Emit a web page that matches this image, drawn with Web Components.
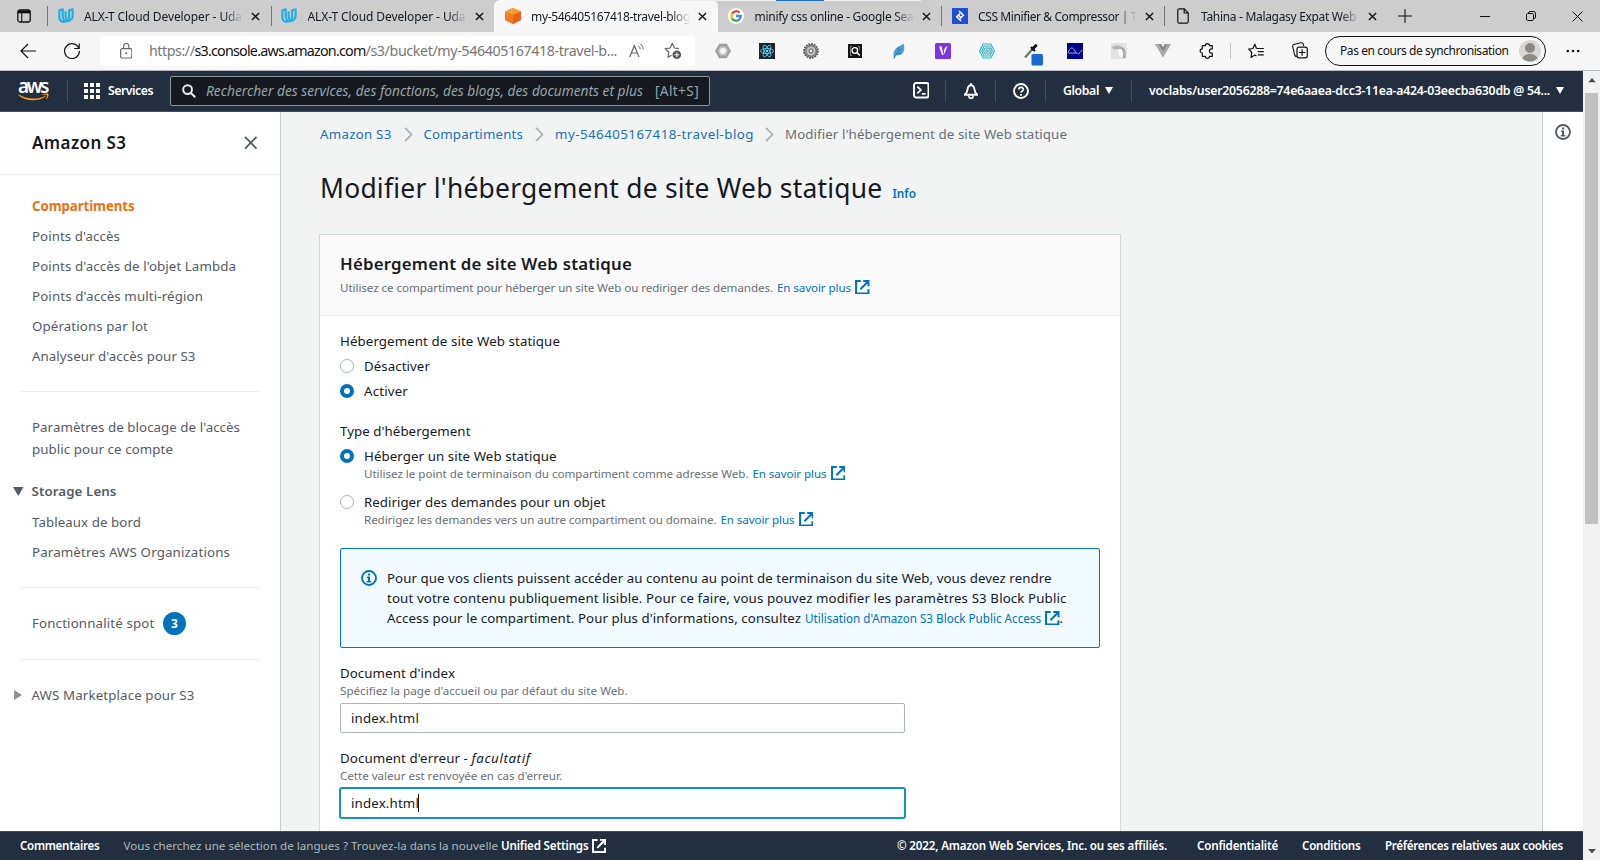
<!DOCTYPE html>
<html lang="fr">
<head>
<meta charset="utf-8">
<title>Modifier l'hébergement de site Web statique</title>
<style>
html,body{margin:0;height:100%;overflow:hidden}
body{font-family:"Noto Sans","Open Sans",sans-serif;font-size:13.3px;color:#16191f;background:#f2f3f3}
</style>
</head>
<body>
<s3-app></s3-app>
<script>
const define = (name, css, html, extra) => customElements.define(name, class extends HTMLElement {
  connectedCallback() {
    if (this.shadowRoot) return;
    const t = document.createElement('template');
    t.innerHTML = `<style>*{box-sizing:border-box}${css}</style>${typeof html === 'function' ? html(this) : html}`;
    this.attachShadow({mode: 'open'}).append(t.content.cloneNode(true));
    if (extra) extra(this);
  }
});

/* One-line text set to a given advance width by tracking. */
define('fit-text', ':host{display:block;white-space:pre;flex:none}span{display:inline-block}', '<span><slot></slot></span>', el => {
  const s = el.shadowRoot.querySelector('span'), w = +el.getAttribute('w');
  const n = el.textContent.length;
  if (!w) return;
  s.style.letterSpacing = ((w - s.getBoundingClientRect().width) / n).toFixed(3) + 'px';
  el.style.width = w + 'px';
});

const ICONS = {
  workspace: ['0 0 14 14', '<rect x=".8" y="1" width="12.4" height="12" rx="2" fill="none" stroke="#111" stroke-width="1.3"/><path d="M1 1.5h12v2.8H1z" fill="#111"/><path d="M4.7 4v9" stroke="#111" stroke-width="1.1"/>'],
  udacity: ['0 0 17 17', '<g fill="none" stroke="#22b1dc" stroke-width="2.300" stroke-linejoin="round"><path d="M1.400 2.500 5 1.300v7.500c0 3.200 2 4.600 4.400 4.900-1.200.700-2.300 1-3.400 1C3.200 14.700 1.400 12.600 1.400 9z"/><path d="M15.600 1.300 11.800 2.500v6.300c0 3.200-1 4.300-2.700 5.200 4.200-.100 6.500-1.900 6.500-6z"/><path d="M8.100 3.500v5.300c0 2 .5 3.200 1.900 4"/></g>'],
  close: ['0 0 10 10', '<path d="m1 1 8 8M9 1 1 9" stroke="#111" stroke-width="1.5"/>'],
  cube: ['0 0 17 17', '<path d="M8.500 0 17 3.700v9.100L8.500 17 0 12.800V3.700z" fill="#f58220"/><path d="m0 3.700 8.500 3.600V17L0 12.800z" fill="#f47a20"/><path d="m17 3.700-8.500 3.600V17l8.500-4.200z" fill="#e8601c"/><path d="m8.500 0 8.500 3.700-8.500 3.600L0 3.700z" fill="#fb9d32"/>'],
  google: ['0 0 16 16', '<circle cx="8" cy="8" r="8" fill="#fff"/><g fill="none" stroke-width="2.300"><path d="M3.900 5.600A4.800 4.800 0 0 1 11.400 4.600" stroke="#ea4335"/><path d="M3.900 10.400a4.800 4.800 0 0 1 0-4.800" stroke="#fbbc05"/><path d="M3.900 10.400a4.800 4.800 0 0 0 7.400 1.100" stroke="#34a853"/><path d="M8 8h4.800a4.800 4.800 0 0 1-1.600 3.600" stroke="#4285f4"/></g>'],
  toptal: ['0 0 16 16', '<path d="M0 0h16v16H0z" fill="#204ecf"/><path d="m7 3 4.300 4.300-3.200 3.200m1 2.500L4.700 8.700l3.200-3.200M6.500 7.200l3 3" fill="none" stroke="#fff" stroke-width="1.500"/>'],
  doc: ['0 0 12 16', '<path d="M1.700.8h5.600L11.200 5v8.700c0 .9-.5 1.500-1.400 1.500H2.200c-.9 0-1.400-.6-1.400-1.500V2.200C.8 1.300 1.300.8 2.200.8M7.200.8V5h4" fill="none" stroke="#111" stroke-width="1.200"/>'],
  plus: ['0 0 14 14', '<path d="M7 0v14M0 7h14" stroke="#111" stroke-width="1.100"/>'],
  min: ['0 0 10 10', '<path d="M0 5.500h10" stroke="#111"/>'],
  restore: ['0 0 10 10', '<path d="M2.500 2.500V2q0-1.500 1.500-1.500h3.500q2 0 2 2V6q0 1.500-1.500 1.500" fill="none" stroke="#111"/><rect x=".5" y="2.500" width="7" height="7" rx="1.200" fill="none" stroke="#111"/>'],
  winclose: ['0 0 11 11', '<path d="m.5.5 10 10m0-10-10 10" stroke="#111"/>'],
  back: ['0 0 16 16', '<path d="M16 8H1M8 1 1 8l7 7" fill="none" stroke="#111" stroke-width="1.200"/>'],
  reload: ['0 0 16 16', '<path d="M14.800 5.200A7.400 7.400 0 1 0 15.400 8M15.200.5v5h-5" fill="none" stroke="#111" stroke-width="1.200"/>'],
  lock: ['0 0 12 16', '<rect x=".6" y="5.600" width="10.800" height="9.400" rx="1.500" fill="none" stroke="#666" stroke-width="1.100"/><path d="M3.500 5.500V3a2.500 2.500 0 0 1 5 0v2.500" fill="none" stroke="#666" stroke-width="1.100"/><circle cx="6" cy="10.300" r="1" fill="#666"/>'],
  read: ['0 0 16 16', '<path d="M.7 14 5.300 2.700 10 14M2.300 10h6" fill="none" stroke="#666" stroke-width="1.200"/><path d="M9.500 3a4 4 0 0 1 1.700 3.400M11.300.8A7 7 0 0 1 14.300 6.500" fill="none" stroke="#666"/>'],
  staradd: ['0 0 18 18', '<path d="M15 6.600 10.400 6 8.300 1.300 6.200 6 1.200 6.700l3.600 3.500L4 15.300l3.700-2" fill="none" stroke="#666" stroke-width="1.200" stroke-linejoin="round"/><circle cx="12.800" cy="12.800" r="4.300" fill="#555"/><path d="M12.800 10.400v4.800m-2.400-2.400h4.800" stroke="#fff"/>'],
  hex: ['0 0 16 16', '<path d="M4.200.8h7.600L16 8l-4.200 7.200H4.200L0 8z" fill="#a0a0a0"/><path d="m5.300 3.500h5.400L13.300 8l-2.600 4.500H5.300L2.700 8z" fill="#c4c4c4"/><circle cx="8" cy="8" r="3" fill="#f4f4f4"/>'],
  react: ['0 0 16 16', '<path d="M0 0h16v16H0z" fill="#20232a"/><g fill="none" stroke="#61dafb" stroke-width=".8"><ellipse cx="8" cy="8" rx="6.500" ry="2.500"/><ellipse cx="8" cy="8" rx="6.500" ry="2.500" transform="rotate(60 8 8)"/><ellipse cx="8" cy="8" rx="6.500" ry="2.500" transform="rotate(120 8 8)"/></g><circle cx="8" cy="8" r="1.300" fill="#61dafb"/>'],
  gear: ['0 0 16 16', '<circle cx="8" cy="8" r="7" fill="#999" stroke="#555" stroke-width="1.800" stroke-dasharray="1.600 1.150"/><circle cx="8" cy="8" r="5.200" fill="#c0c0c0" stroke="#666"/><circle cx="8" cy="8" r="2" fill="#eee" stroke="#555"/>'],
  lens: ['0 0 14 14', '<path d="M0 0h14v14H0z" fill="#151515"/><path d="M4 2.500H2.500v9H4M10 2.500h1.500v3" fill="none" stroke="#999" stroke-width=".8"/><circle cx="6.800" cy="6.500" r="2.800" fill="none" stroke="#fff" stroke-width="1.300"/><path d="m8.800 8.500 3 3" stroke="#fff" stroke-width="1.400"/>'],
  feather: ['0 0 14 16', '<path d="M11.500.5C13 5 12.500 10 9 11.500 6.500 12.600 4.500 12.500 4 12.500L2 15.800C1 11 1.500 7 5 4.500 7.500 2.800 10 2 11.500.5z" fill="#4f9fd3"/><path d="M1.800 15.800C3.500 11 6.500 8 10 5M6 8V4.500M4.500 10l5 .5" stroke="#2b72a8" stroke-width=".8" fill="none"/>'],
  veed: ['0 0 16 16', '<rect width="16" height="16" rx="1.500" fill="#7a36e0"/><path d="M4 3.500h2.700L8.300 12h-1.200z" fill="#fff"/><path d="M9.200 6.500 11 3.500h1.500L8.500 12.500z" fill="#fff"/>'],
  web: ['0 0 16 16', '<g fill="none" stroke="#35b5c5" stroke-width="1.200"><path d="M4.200 1h7.600L15.500 8l-3.700 7H4.200L.5 8z"/><path d="M5.200 3h5.600l2.500 5-2.500 5H5.200L2.700 8z"/><circle cx="8" cy="8" r="3.200"/><circle cx="8" cy="8" r="1.100"/></g>'],
  dropper: ['0 0 19 22', '<path d="M1 13.500 8.500 5" stroke="#5c7a5c" stroke-width="2"/><path d="m7 3 4 4" stroke="#111" stroke-width="2.200"/><path d="m8.500 5 3.300-3.300" stroke="#111" stroke-width="3" stroke-linecap="round"/><rect x="7.500" y="10" width="11.500" height="11.500" rx="1.500" fill="#1967d2"/>'],
  wave: ['0 0 16 16', '<path d="M0 0h16v16H0z" fill="#00008b"/><path d="M1 10C3 3.500 6 4 8 8s4 3.500 7-1M1.500 10h8" fill="none" stroke="#b8b8e8" stroke-width=".9"/>'],
  paint: ['0 0 16 16', '<path d="M0 0h16v16H0z" fill="#e2e2e2"/><path d="M1 4.500C3 2 8 2 11 4v2L3 6.500z" fill="#b4b4b4"/><path d="M8 6h3l1 8H9c-2-2-2-5-1-8z" fill="#fafafa"/><path d="M10.500 4c3 .5 5 3.500 4 10.500l-3 1c1.500-5 .5-8-2-10z" fill="#a9a9a9"/>'],
  vue: ['0 0 16 14', '<path d="M0 0h3.200L8 8.300 12.800 0H16L8 13.800z" fill="#aaa"/><path d="M3.200 0h3L8 3.200 9.800 0h3L8 8.300z" fill="#858585"/>'],
  puzzle: ['0 0 16 16', '<path d="M3.300 2.700h3a2.100 2.100 0 0 1 4.200 0h2.800v3.200h-.8a2.100 2.100 0 0 0 0 4.200h.8v3.200h-2.800a2.100 2.100 0 0 1-4.200 0h-3V10a2.100 2.100 0 0 1 0-4.200z" fill="none" stroke="#111" stroke-width="1.200" stroke-linejoin="round"/>'],
  favs: ['0 0 17 16', '<path d="M8.500 5.500 6.800 1.200 4.900 5.500.7 6.200l3.100 3.300-.8 4.900 3.800-2.300 1.700 1M8.500 5.500h7.300M9.800 8.700h6M9.800 11.900h6" fill="none" stroke="#111" stroke-width="1.200" stroke-linejoin="round"/>'],
  collect: ['0 0 16 17', '<path d="M5 14.500c-1.500 0-2-.4-2.300-1.500L.8 4.800c-.3-1.200 0-2 1-2.300L9 .8c1.200-.3 2 .1 2.300 1.300l.4 1.700" fill="none" stroke="#111" stroke-width="1.100"/><rect x="5" y="5.200" width="10.300" height="10.600" rx="2" fill="#f7f7f7" stroke="#111" stroke-width="1.200"/><path d="M10.100 7.300v6.400m-3.200-3.200h6.400" stroke="#111" stroke-width="1.200"/>'],
  avatar: ['0 0 22 22', '<circle cx="11" cy="11" r="11" fill="#d9d6d3"/><circle cx="11" cy="8" r="5" fill="#8c8886"/><path d="M3.500 18.500c1-3.300 4-4.500 7.500-4.500s6.500 1.200 7.500 4.500a11 11 0 0 1-15 0z" fill="#8c8886"/>'],
  dots: ['0 0 14 4', '<g fill="#111"><circle cx="1.800" cy="2" r="1.300"/><circle cx="7" cy="2" r="1.300"/><circle cx="12.200" cy="2" r="1.300"/></g>'],
  smile: ['0 0 31 8', '<path d="M.3 1.300C8 6 18 7.200 27 2.900l.5.900C19 9 7.500 8.500.2 1.900z" fill="#f79a1f"/><path d="M24.500 1.300C27 .3 29.500.2 30.300.9c.7.800-.2 3.800-1.800 5.400-.3.200-.6.100-.4-.300C28.800 4.300 29.300 2.700 29 2.200c-.4-.5-2.500-.4-4.300-.4-.4 0-.5-.3-.2-.5z" fill="#f79a1f"/>'],
  grid: ['0 0 16 16', '<g fill="#fff"><path d="M0 0h4v4H0zM6 0h4v4H6zM12 0h4v4h-4zM0 6h4v4H0zM6 6h4v4H6zM12 6h4v4h-4zM0 12h4v4H0zM6 12h4v4H6zM12 12h4v4h-4z"/></g>'],
  search: ['0 0 14 14', '<circle cx="5.600" cy="5.600" r="4.400" fill="none" stroke="#eaeded" stroke-width="1.900"/><path d="m8.900 8.900 4.300 4.300" stroke="#eaeded" stroke-width="2.100"/>'],
  shell: ['0 0 16 16', '<rect x="1" y="1" width="14" height="14" rx="1.800" fill="none" stroke="#fff" stroke-width="1.900"/><path d="m4.200 4.500 3.500 3.300-3.500 3.300M8.500 11.500h3.700" fill="none" stroke="#fff" stroke-width="1.700"/>'],
  bell: ['0 0 16 16', '<path d="M1 11.700h14M2 11.200c2-1.200 2.300-2.700 2.600-5C5 3.300 6 2.300 8 2.300s3 1 3.400 3.900c.3 2.300.6 3.800 2.600 5M8 2.300V.2" fill="none" stroke="#fff" stroke-width="1.900"/><path d="M5.900 12.500v.7a2.100 2.100 0 0 0 4.200 0v-.7" fill="none" stroke="#fff" stroke-width="1.600"/>'],
  help: ['0 0 16 16', '<circle cx="8" cy="8" r="7" fill="none" stroke="#fff" stroke-width="1.900"/><path d="M5.700 6.600c0-3 4.700-2.900 4.700-.2C10.400 8 8 8 8 9.800" fill="none" stroke="#fff" stroke-width="1.600"/><path d="M7.100 11h1.800v1.700H7.100z" fill="#fff"/>'],
  down: ['0 0 8 7', '<path d="M0 0h8L4 7z" fill="currentColor"/>'],
  right: ['0 0 8 10', '<path d="M0 0v10l8-5z" fill="currentColor"/>'],
  x: ['0 0 14 14', '<path d="m1 1 12 12M13 1 1 13" stroke="#545b64" stroke-width="1.900"/>'],
  chev: ['0 0 9 16', '<path d="m1 1 6.500 7L1 15" fill="none" stroke="#aab7b8" stroke-width="1.900"/>'],
  info: ['0 0 16 16', '<circle cx="8" cy="8" r="7" fill="none" stroke="currentColor" stroke-width="1.900"/><path d="M7 3.600h2v1.800H7zM6 6.600h3v4.300h1.300v1.500H5.800v-1.500H7V8H6z" fill="currentColor"/>'],
  ext: ['0 0 15 15', '<path d="M6 1.100H1.100v12.800h12.800V9.500" fill="none" stroke="currentColor" stroke-width="2.100"/><path d="M8.500 0H15v6.500h-2V3.700L6.300 10.300 4.800 8.900 11.500 2h-3z" fill="currentColor"/>']
};
define('ui-icon', ':host{display:block;flex:none;line-height:0}svg{display:block;width:100%;height:100%}', el => {
  const [vb, body] = ICONS[el.getAttribute('name')];
  el.style.width = el.getAttribute('w') + 'px';
  el.style.height = (el.getAttribute('h') || el.getAttribute('w')) + 'px';
  return `<svg viewBox="${vb}" preserveAspectRatio="none">${body}</svg>`;
});

define('browser-tab', `:host{display:flex;align-items:center;width:223.5px;height:32px;padding:0 0 0 9px;flex:none;border-left:1px solid transparent}
:host([sep]){border-image:linear-gradient(transparent 20%,#777 20% 80%,transparent 80%) 1}
:host([active]){background:#f7f7f7;border-radius:6px 6px 0 0}
.i{width:17px;display:flex;justify-content:center;margin-right:10px;flex:none}.t{width:159px;overflow:hidden;-webkit-mask:linear-gradient(90deg,#000 88%,transparent);font-size:12px;margin-right:8px;flex:none}`,
  el => `<div class="i"><ui-icon name="${el.getAttribute('icon')}" w="${el.getAttribute('iw') || 16}" h="16"></ui-icon></div><div class="t"><fit-text w="${el.getAttribute('tw')}">${el.getAttribute('label')}</fit-text></div><ui-icon name="close" w="9"></ui-icon>`);

define('tab-strip', `:host{display:flex;align-items:center;height:32px;background:#cdcdcd;padding-left:17px;position:relative}
.a{width:30px;flex:none}.w{display:flex;align-items:center;margin-left:10px;flex:1}.ctl{display:flex;align-items:center;gap:36px;margin-left:auto;padding-right:17px}
.top{position:absolute;left:680px;top:0;width:241px;height:1px;background:#eee}.top i{display:block;width:48px;height:1px;margin-left:96px;background:#1b6ec2}`,
`<div class="a"><ui-icon name="workspace" w="14"></ui-icon></div>
<browser-tab sep icon="udacity" label="ALX-T Cloud Developer - Uda" tw="158"></browser-tab>
<browser-tab sep icon="udacity" label="ALX-T Cloud Developer - Uda" tw="158"></browser-tab>
<browser-tab active icon="cube" label="my-546405167418-travel-blog" tw="159"></browser-tab>
<browser-tab icon="google" label="minify css online - Google Sea" tw="159"></browser-tab>
<browser-tab sep icon="toptal" label="CSS Minifier &amp; Compressor | T" tw="159" style="width:223px"></browser-tab>
<browser-tab sep icon="doc" iw="12" label="Tahina - Malagasy Expat Web" tw="155"></browser-tab>
<div class="w"><ui-icon name="plus" w="14"></ui-icon><div class="ctl"><ui-icon name="min" w="10"></ui-icon><ui-icon name="restore" w="10"></ui-icon><ui-icon name="winclose" w="11"></ui-icon></div></div><div class="top"><i></i></div>`);

define('address-bar', `:host{display:flex;align-items:center;height:30px;width:595px;background:#fff;border-radius:4px;margin-left:20px;padding:0 13px 0 19.500px;font-size:14.300px;color:#767676;flex:none}
b{font-weight:400;color:#111}.u{display:flex;margin:0 12px 0 17px}`,
`<ui-icon name="lock" w="12.500" h="16"></ui-icon><div class="u"><fit-text w="45.500">https://</fit-text><fit-text w="171"><b>s3.console.aws.amazon.com</b></fit-text><fit-text w="251.500">/s3/bucket/my-546405167418-travel-b...</fit-text></div><ui-icon name="read" w="16"></ui-icon><ui-icon name="staradd" w="18" style="margin-left:19px"></ui-icon>`);

define('tool-bar', `:host{display:flex;align-items:center;height:39px;background:#f7f7f7;padding:0 20.500px 1px 20px;border-bottom:1px solid #b9bcc0}
.e{display:flex;width:44px;justify-content:center;flex:none}.x{display:flex;align-items:center;margin-left:6px}.sep{width:1px;height:16px;background:#c4c4c4;margin-left:1px}
.pill{display:flex;align-items:center;justify-content:space-between;width:221px;height:30px;border:1.200px solid #111;border-radius:15px;padding:0 4px 0 14px;font-size:12px;color:#111}`,
`<ui-icon name="back" w="16"></ui-icon><ui-icon name="reload" w="16" style="margin-left:28px"></ui-icon><address-bar></address-bar>
<div class="x">${[['hex',16],['react',16],['gear',16],['lens',14],['feather',14,16],['veed',16],['web',16],['dropper',19,22],['wave',16],['paint',16],['vue',16,14],['puzzle',16]].map(([n,w,h])=>`<div class="e"><ui-icon name="${n}" w="${w}" h="${h||w}"${n==='dropper'?' style="margin:4px 0 -4px 5px"':''}></ui-icon></div>`).join('')}</div><div class="sep"></div>
<ui-icon name="favs" w="17" h="16" style="margin-left:17px"></ui-icon><ui-icon name="collect" w="16" h="17" style="margin:0 17.500px 0 26.500px"></ui-icon>
<div class="pill"><fit-text w="168.500">Pas en cours de synchronisation</fit-text><ui-icon name="avatar" w="22"></ui-icon></div><ui-icon name="dots" w="14" h="4" style="margin-left:auto"></ui-icon>`);

define('aws-header', `:host{display:flex;align-items:center;height:41px;background:#232f3e;color:#fff;font-size:12.300px;font-weight:600;padding:0 0 1px 18px;border-bottom:1px solid #414d5c}
.logo{width:31px;height:24px;padding-top:1px}.logo fit-text{font:600 19px/13px "Noto Sans",sans-serif}.s{width:1px;height:22px;background:#414d5c;flex:none}
.q{display:flex;align-items:center;width:540px;height:30px;border:1px solid #879596;border-radius:2px;background:#16191f;color:#95a5a6;margin-left:17px;padding:0 10px 0 11px;font-size:13.700px;font-weight:400}.ph{width:437px;overflow:hidden;font-style:italic;margin-left:10px}`,
`<div class="logo"><fit-text w="29">aws</fit-text><ui-icon name="smile" w="31" h="8"></ui-icon></div><div class="s" style="margin:0 16px 0 18px"></div><ui-icon name="grid" w="16"></ui-icon><fit-text w="45" style="margin-left:8px">Services</fit-text>
<div class="q"><ui-icon name="search" w="14"></ui-icon><div class="ph"><fit-text w="437">Rechercher des services, des fonctions, des blogs, des documents et plus</fit-text></div><fit-text w="44" style="margin-left:auto">[Alt+S]</fit-text></div>
<ui-icon name="shell" w="16.500" style="margin-left:202.500px"></ui-icon><div class="s" style="margin:0 17px 0 16px"></div><ui-icon name="bell" w="16"></ui-icon><div class="s" style="margin:0 17px 0 16px"></div><ui-icon name="help" w="16"></ui-icon><div class="s" style="margin:0 17px 0 16px"></div>
<fit-text w="36">Global</fit-text><ui-icon name="down" w="8" h="7" style="margin-left:6px"></ui-icon><div class="s" style="margin:0 17px 0 18px"></div><fit-text w="401">voclabs/user2056288=74e6aaea-dcc3-11ea-a424-03eecba630db @ 54...</fit-text><ui-icon name="down" w="8" h="7" style="margin-left:6px"></ui-icon>`);

define('nav-item', `:host{display:flex;align-items:center;height:30px;padding-left:32px;color:#545b64}:host([current]){color:#ec7211;font-weight:700}
:host([group]){padding-left:13px}ui-icon{margin-right:8px}.b{width:23px;height:23px;border-radius:50%;background:#0073bb;color:#fff;font:700 12px/23px "Noto Sans",sans-serif;text-align:center;margin-left:8.500px}`,
  el => `${el.hasAttribute('group') ? (el.getAttribute('group') === 'open' ? '<ui-icon name="down" w="10.500" h="9"></ui-icon>' : '<ui-icon name="right" w="8" h="10" style="color:#879596;margin:0 9.500px 0 1px"></ui-icon>') : ''}<fit-text w="${el.getAttribute('w')}">${el.getAttribute('label')}</fit-text>${el.hasAttribute('badge') ? `<div class="b">${el.getAttribute('badge')}</div>` : ''}`);

define('side-nav', `:host{display:block;width:281px;background:#fff;border-right:1px solid #c8ced1;flex:none}
header{display:flex;align-items:center;justify-content:space-between;height:62.500px;padding:0 23px 0 32px;border-bottom:1px solid #eaeded;font-size:17px;font-weight:600}
hr{border:0;border-top:1px solid #eaeded;margin:0 20px}`,
`<header><fit-text w="94.500">Amazon S3</fit-text><ui-icon name="x" w="13.500"></ui-icon></header>
<nav style="padding-top:16.500px"><nav-item current w="102.500" label="Compartiments"></nav-item><nav-item w="88" label="Points d'accès"></nav-item><nav-item w="204" label="Points d'accès de l'objet Lambda"></nav-item><nav-item w="171" label="Points d'accès multi-région"></nav-item><nav-item w="116" label="Opérations par lot"></nav-item><nav-item w="163.500" label="Analyseur d'accès pour S3"></nav-item></nav>
<hr style="margin-top:20px"><nav style="padding-top:24px"><nav-item style="height:22px" w="208" label="Paramètres de blocage de l'accès"></nav-item><nav-item style="height:22px" w="141" label="public pour ce compte"></nav-item>
<nav-item style="margin-top:16px;font-weight:600" group="open" w="85" label="Storage Lens"></nav-item><nav-item style="margin-top:1px" w="109" label="Tableaux de bord"></nav-item><nav-item w="198" label="Paramètres AWS Organizations"></nav-item></nav>
<hr style="margin-top:20px"><nav-item style="margin:20px 0 21px" w="122.500" label="Fonctionnalité spot" badge="3"></nav-item><hr><nav-item style="margin-top:20px" group="closed" w="163" label="AWS Marketplace pour S3"></nav-item>`);

define('ext-link', ':host{display:flex;align-items:center;color:#0073bb;flex:none}ui-icon{margin-left:4px}', el => `<fit-text w="${el.getAttribute('w')}">${el.getAttribute('label')}</fit-text><ui-icon name="ext" w="14.500"></ui-icon>`);

define('text-row', ':host{display:flex;align-items:center;height:20px}:host([hint]){height:17px;padding-bottom:1px;margin-top:-1px;font-size:11.600px;color:#687078}ext-link{margin-left:4px}',
  el => `<fit-text w="${el.getAttribute('w')}">${el.getAttribute('label')}</fit-text><slot></slot>${el.hasAttribute('link') ? `<ext-link w="${el.getAttribute('lw') || 74}" label="${el.getAttribute('link')}"></ext-link>` : ''}`);

define('radio-row', `:host{display:flex;align-items:center;height:20px}i{width:14px;height:14px;border:1px solid #aab7b8;border-radius:50%;margin-right:10px;background:#fff}:host([checked]) i{border:4.500px solid #0073bb}`,
  el => `<i></i><fit-text w="${el.getAttribute('w')}">${el.getAttribute('label')}</fit-text>`);

define('text-input', `:host{display:flex;align-items:center;width:565px;height:30px;border:1px solid #aab7b8;border-radius:2px;background:#fff;padding-left:10px}:host([focused]){width:567px;height:32px;border:2px solid #1595b0;border-radius:3px;margin-left:-1px}
i{width:1px;height:18px;background:#111;margin-left:-1px}`, el => `<fit-text w="68">${el.getAttribute('value')}</fit-text>${el.hasAttribute('focused') ? '<i></i>' : ''}`);

define('bread-crumbs', ':host{display:flex;align-items:center;height:44px;color:#1f6fb2}ui-icon{margin:0 11px 0 12px}.l{color:#687078}',
`<fit-text w="71.500">Amazon S3</fit-text><ui-icon name="chev" w="9" h="15"></ui-icon><fit-text w="99.500">Compartiments</fit-text><ui-icon name="chev" w="9" h="15"></ui-icon><fit-text w="199">my-546405167418-travel-blog</fit-text><ui-icon name="chev" w="9" h="15" style="margin-left:11px"></ui-icon><fit-text class="l" w="282">Modifier l'hébergement de site Web statique</fit-text>`);

define('info-alert', `:host{display:flex;width:760px;height:100px;border:1px solid #0073bb;border-radius:2px;background:#f1faff;margin-top:20px;padding:19px 0 0 20px;color:#16191f}
ui-icon{color:#0073bb;margin:2px 10px 0 0}.l{display:flex;align-items:center;height:20px}ext-link{font-size:11.700px;margin:0 0 0 4px}`,
`<ui-icon name="info" w="16"></ui-icon><div><div class="l"><fit-text w="664.500">Pour que vos clients puissent accéder au contenu au point de terminaison du site Web, vous devez rendre</fit-text></div><div class="l"><fit-text w="679.500">tout votre contenu publiquement lisible. Pour ce faire, vous pouvez modifier les paramètres S3 Block Public</fit-text></div><div class="l"><fit-text w="414">Access pour le compartiment. Pour plus d'informations, consultez</fit-text><ext-link w="236" label="Utilisation d'Amazon S3 Block Public Access"></ext-link>.</div></div>`);

define('hosting-panel', `:host{display:block;width:802px;height:700px;margin-top:15px;margin-left:-1px;border:1px solid #d5dbdb;background:#fff;padding:0}
header{height:81px;background:#fafafa;border-bottom:1px solid #eaeded;padding:18px 20px 0}header fit-text{font-size:16.800px;font-weight:600;line-height:22px}.b{padding:14px 20px}`,
`<header><fit-text w="292">Hébergement de site Web statique</fit-text><text-row hint style="height:24px;margin-top:0;padding:0" w="433" label="Utilisez ce compartiment pour héberger un site Web ou rediriger des demandes." link="En savoir plus"></text-row></header>
<div class="b"><text-row style="height:22px;margin-bottom:1px" w="220" label="Hébergement de site Web statique"></text-row><radio-row style="height:25px" w="66" label="Désactiver"></radio-row><radio-row checked style="height:25px" w="44" label="Activer"></radio-row>
<text-row style="margin-top:18px;margin-bottom:5px" w="130.500" label="Type d'hébergement"></text-row>
<radio-row checked w="192.500" label="Héberger un site Web statique"></radio-row><text-row hint style="margin-left:24px" w="384.500" label="Utilisez le point de terminaison du compartiment comme adresse Web." link="En savoir plus"></text-row>
<radio-row style="margin-top:10px" w="241.500" label="Rediriger des demandes pour un objet"></radio-row><text-row hint style="margin-left:24px" w="352.500" label="Redirigez les demandes vers un autre compartiment ou domaine." link="En savoir plus"></text-row>
<info-alert></info-alert>
<text-row style="margin-top:15px" w="115" label="Document d'index"></text-row><text-row hint w="287.500" label="Spécifiez la page d'accueil ou par défaut du site Web."></text-row><text-input style="margin-top:4px" value="index.html"></text-input>
<text-row style="margin-top:15px" w="131.500" label="Document d'erreur - "><fit-text w="59" style="font-style:italic">facultatif</fit-text></text-row><text-row hint w="222" label="Cette valeur est renvoyée en cas d'erreur."></text-row><text-input focused style="margin-top:3px" value="index.html"></text-input></div>`);

define('main-content', `:host{display:block;flex:1;min-width:0;overflow:hidden;background:#f2f3f3;padding-left:39px;font-size:13.300px}
.h{display:flex;align-items:baseline;height:63px;line-height:64px;font-size:26.400px;gap:10px}.h .i{font-size:11.800px;font-weight:600;color:#0073bb}`,
`<bread-crumbs></bread-crumbs><div class="h"><fit-text w="562.500">Modifier l'hébergement de site Web statique</fit-text><fit-text class="i" w="23.500">Info</fit-text></div><hosting-panel></hosting-panel>`);

define('aws-footer', `:host{display:flex;align-items:center;height:29px;background:#232f3e;border-top:1px solid #414d5c;color:#fff;font-size:11.600px;font-weight:600;padding:0 20px 1px}.g{color:#aab7b8;font-weight:400;margin:0 3px 0 24px}.r{display:flex;margin-left:auto}`,
`<fit-text w="79.500">Commentaires</fit-text><fit-text class="g" w="374.500">Vous cherchez une sélection de langues ? Trouvez-la dans la nouvelle</fit-text><fit-text w="87.500">Unified Settings</fit-text><ui-icon name="ext" w="14" style="margin-left:3px"></ui-icon>
<div class="r"><fit-text w="270">© 2022, Amazon Web Services, Inc. ou ses affiliés.</fit-text><fit-text w="81" style="margin-left:30px">Confidentialité</fit-text><fit-text w="58.500" style="margin-left:24px">Conditions</fit-text><fit-text w="178" style="margin-left:24.500px">Préférences relatives aux cookies</fit-text></div>`);

define('scroll-bar', ':host{display:flex;flex-direction:column;align-items:center;width:17px;background:#f1f1f1;color:#505050}.t{width:13px;height:431px;background:#c1c1c1;margin-top:10px}.u{margin-top:7px;transform:scaleY(-1)}.d{margin:auto 0 7px}',
'<ui-icon class="u" name="down" w="8" h="4.500"></ui-icon><div class="t"></div><ui-icon class="d" name="down" w="8" h="4.500"></ui-icon>');

define('s3-app', `:host{display:flex;flex-direction:column;width:1600px;height:860px;overflow:hidden}.v{display:flex;height:789px}.p{display:flex;flex-direction:column;width:1583px}.m{display:flex;height:719px}.r{width:41px;background:#fff;border-left:1px solid #c8ced1;padding:12px 0 0 12px;color:#545b64;flex:none}`,
`<tab-strip></tab-strip><tool-bar></tool-bar><div class="v"><div class="p"><aws-header></aws-header><div class="m"><side-nav></side-nav><main-content></main-content><div class="r"><ui-icon name="info" w="16"></ui-icon></div></div><aws-footer></aws-footer></div><scroll-bar></scroll-bar></div>`);
</script>
</body>
</html>
